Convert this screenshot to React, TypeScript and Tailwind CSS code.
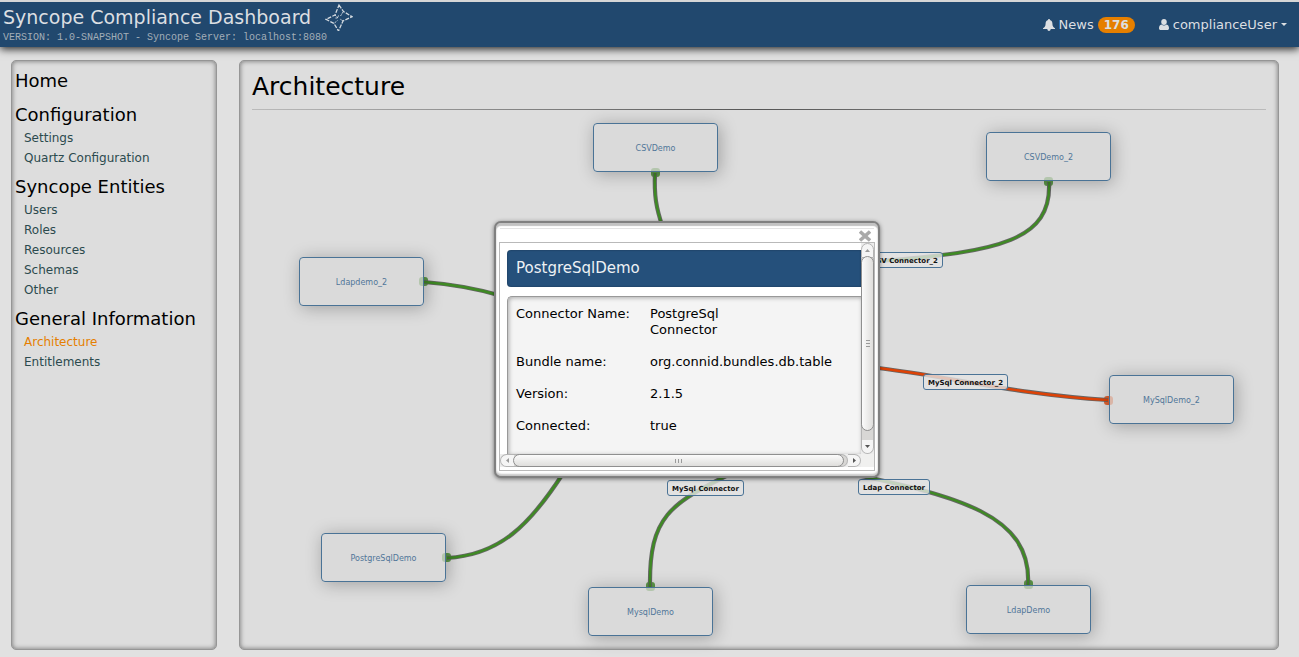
type MenuSection = { title: string; items: string[] };

const menu: MenuSection[] = [
  { title: "Home", items: [] },
  { title: "Configuration", items: ["Settings", "Quartz Configuration"] },
  { title: "Syncope Entities", items: ["Users", "Roles", "Resources", "Schemas", "Other"] },
  { title: "General Information", items: ["Architecture", "Entitlements"] },
];

const nodes = [
  { name: "CSVDemo", place: "left-[341px] top-[13px]" },
  { name: "CSVDemo_2", place: "left-[734px] top-[22px]" },
  { name: "Ldapdemo_2", place: "left-[47px] top-[147px]" },
  { name: "MySqlDemo_2", place: "left-[857px] top-[265px]" },
  { name: "PostgreSqlDemo", place: "left-[69px] top-[423px]" },
  { name: "MysqlDemo", place: "left-[336px] top-[477px]" },
  { name: "LdapDemo", place: "left-[714px] top-[475px]" },
];

const labels = [
  { name: "CSV Connector_2", place: "left-[614px] top-[142px]" },
  { name: "MySql Connector_2", place: "left-[671px] top-[264px]" },
  { name: "MySql Connector", place: "left-[415px] top-[370px]" },
  { name: "Ldap Connector", place: "left-[606px] top-[369px]" },
];

const GREEN = "#3f8a24";
const RED = "#dd4206";

const links = [
  { d: "M403 63 C402 85 404 98 411 118", color: GREEN, x: 403, y: 63 },
  { d: "M797 72 C800 130 748 142 628 151", color: GREEN, x: 796, y: 72 },
  { d: "M172 172 C198 174 223 178 250 186", color: GREEN, x: 171, y: 172 },
  { d: "M856 290 C758 284 698 266 618 257", color: RED, x: 856, y: 291 },
  { d: "M195 448 C248 445 278 415 312 362", color: GREEN, x: 194, y: 448 },
  { d: "M398 477 C397 406 418 394 480 363", color: GREEN, x: 398, y: 477 },
  { d: "M776 475 C780 405 708 386 590 362", color: GREEN, x: 776, y: 475 },
];

const details = [
  ["Connector Name:", "PostgreSql Connector"],
  ["Bundle name:", "org.connid.bundles.db.table"],
  ["Version:", "2.1.5"],
  ["Connected:", "true"],
];

function Logo() {
  return (
    <svg className="h-7 w-7" viewBox="0 0 28 28" fill="none" stroke="#d3dae0" strokeWidth="1.300" aria-hidden="true">
      <path d="M14 2 L18.500 8.500 L27 13.700 L18 18 L13.500 28 L9 20.500 L1 16.300 L10 12 Z" strokeDasharray="4 1.300" />
      <path d="M10 12 L13 15 M13.500 12.500 L12.500 15 L10 15 M18 9 L15.500 13 M18 18 L15 16 M9.500 20 L12.500 17.500" strokeWidth="0.900" strokeDasharray="2 0.800" />
    </svg>
  );
}

function BellIcon() {
  return (
    <svg className="h-3 w-3" viewBox="0 0 12 12" fill="currentColor" aria-hidden="true">
      <path d="M6 0 C6.600 0 7 0.400 6.900 1 C8.600 1.400 9.400 2.700 9.400 4.500 C9.400 7 10.300 8.400 12 9.300 V10 H7.700 C7.600 11.300 6.900 12 6 12 C5.100 12 4.400 11.300 4.300 10 H0 V9.300 C1.700 8.400 2.600 7 2.600 4.500 C2.600 2.700 3.400 1.400 5.100 1 C5 0.400 5.400 0 6 0 Z" />
    </svg>
  );
}

function UserIcon() {
  return (
    <svg className="h-[11px] w-[10px]" viewBox="0 0 10 11" fill="currentColor" aria-hidden="true">
      <path d="M5 0 C6.700 0 7.800 1.300 7.800 3 C7.800 4.700 6.600 6 5 6 C3.400 6 2.200 4.700 2.200 3 C2.200 1.300 3.300 0 5 0 Z M2.500 5.400 C4 6.900 6 6.900 7.500 5.400 C9.300 5.600 10 7.200 10 9.200 C10 10.400 9.300 11 8.300 11 H1.700 C0.700 11 0 10.400 0 9.200 C0 7.200 0.700 5.600 2.500 5.400 Z" />
    </svg>
  );
}

function Header() {
  return (
    <header className="relative flex h-[47px] items-center justify-between border-t-2 border-[#d6d6d6] bg-[#21486e] pl-[3px] pr-3 text-[#dcdfe2] shadow-[0_2px_8px_rgba(0,0,0,0.85)]">
      <div className="self-start">
        <div className="flex h-[30px] items-center gap-[14px]">
          <span className="text-[19px] leading-7">Syncope Compliance Dashboard</span>
          <Logo />
        </div>
        <p className="font-['Liberation_Mono',monospace] text-[10px] leading-3 text-[#a3aeb8]">
          VERSION: 1.0-SNAPSHOT - Syncope Server: localhost:8080
        </p>
      </div>
      <nav className="flex items-center gap-6 text-[13px] leading-4">
        <a href="#news" className="flex items-center gap-1">
          <BellIcon />
          News
          <span className="rounded-full bg-[#e57f00] px-[6px] text-[12px] font-bold leading-4">176</span>
        </a>
        <button type="button" className="flex items-center gap-1">
          <UserIcon />
          complianceUser
          <svg className="h-[3px] w-[6px]" viewBox="0 0 6 3" fill="currentColor" aria-hidden="true">
            <path d="M0 0 H6 L3 3 Z" />
          </svg>
        </button>
      </nav>
    </header>
  );
}

function Sidebar() {
  return (
    <nav className="w-[206px] shrink-0 rounded-[5px] border border-[#969696] bg-[#dddddd] px-[3px] pt-[7px] shadow-[inset_0_0_5px_rgba(0,0,0,0.5)]">
      {menu.map((section) => (
        <section key={section.title} className="mb-[6px] first:mb-[9px]">
          <h2 className="text-[18px] leading-[25px] text-black">{section.title}</h2>
          {section.items.length > 0 && (
            <ul className="pl-[9px] pt-px">
              {section.items.map((item) => (
                <li key={item} className="h-5 text-[12px] leading-5">
                  <a href={"#" + item} className={item === "Architecture" ? "text-[#e57f00]" : "text-[#2c4a4e]"}>
                    {item}
                  </a>
                </li>
              ))}
            </ul>
          )}
        </section>
      ))}
    </nav>
  );
}

function Connections() {
  return (
    <svg className="absolute inset-0 h-full w-full overflow-visible" fill="none" aria-hidden="true">
      {links.map((l) => (
        <g key={l.d}>
          <rect x={l.x - 4} y={l.y - 5} width="9" height="9" rx="3" fill={l.color} opacity="0.800" />
          <path d={l.d} stroke="#666666" strokeWidth="4.200" />
          <path d={l.d} stroke={l.color} strokeWidth="2.400" />
        </g>
      ))}
    </svg>
  );
}

function VerticalScrollbar() {
  return (
    <div className="flex w-[13px] flex-col bg-[#ececec]">
      <button type="button" aria-label="Scroll up" className="flex h-[15px] items-center justify-center rounded-t-full border border-[#b4b4b4] bg-[#f5f5f5]">
        <svg className="h-[3px] w-[5px]" viewBox="0 0 5 3" fill="#9a9a9a"><path d="M0 3 L2.500 0 L5 3 Z" /></svg>
      </button>
      <div className="flex flex-1 flex-col border-x border-[#b4b4b4] bg-[#d8d7d5] pb-[9px]">
        <div className="-mx-px -mt-[2px] flex flex-1 flex-col items-center justify-center gap-[2px] rounded-full border border-[#8f8f8f] bg-linear-to-r from-[#fbfbfb] to-[#dfdedc]">
          <span className="h-px w-[4px] bg-[#9a9a9a]" />
          <span className="h-px w-[4px] bg-[#9a9a9a]" />
          <span className="h-px w-[4px] bg-[#9a9a9a]" />
        </div>
      </div>
      <button type="button" aria-label="Scroll down" className="flex h-[14px] items-center justify-center rounded-b-full border border-t-0 border-[#b4b4b4] bg-[#f5f5f5]">
        <svg className="h-[3px] w-[5px]" viewBox="0 0 5 3" fill="#555555"><path d="M0 0 L2.500 3 L5 0 Z" /></svg>
      </button>
    </div>
  );
}

function HorizontalScrollbar() {
  return (
    <div className="flex h-[13px] bg-[#ececec]">
      <button type="button" aria-label="Scroll left" className="flex w-[14px] items-center justify-center rounded-l-full border border-r-0 border-[#b4b4b4] bg-[#f5f5f5]">
        <svg className="h-[5px] w-[3px]" viewBox="0 0 3 5" fill="#9a9a9a"><path d="M3 0 L0 2.500 L3 5 Z" /></svg>
      </button>
      <div className="flex flex-1 rounded-r-full border-y border-r border-[#b4b4b4] bg-[#d8d7d5] pr-[3px]">
        <div className="-my-px -ml-px flex flex-1 items-center justify-center gap-[2px] rounded-full border border-[#8f8f8f] bg-linear-to-b from-[#fbfbfb] to-[#dfdedc]">
          <span className="h-[4px] w-px bg-[#9a9a9a]" />
          <span className="h-[4px] w-px bg-[#9a9a9a]" />
          <span className="h-[4px] w-px bg-[#9a9a9a]" />
        </div>
      </div>
      <button type="button" aria-label="Scroll right" className="flex w-[13px] items-center justify-center rounded-r-full border border-l-0 border-[#b4b4b4] bg-[#f5f5f5]">
        <svg className="h-[5px] w-[3px]" viewBox="0 0 3 5" fill="#555555"><path d="M0 0 L3 2.500 L0 5 Z" /></svg>
      </button>
    </div>
  );
}

function ConnectorDialog() {
  return (
    <section
      role="dialog"
      aria-label="PostgreSqlDemo"
      className="absolute left-[242px] top-[111px] flex h-[257px] w-[386px] flex-col rounded-[7px] border-2 border-[#808080] bg-white px-[3px] pb-[5px] shadow-[0_1px_4px_rgba(0,0,0,0.5),inset_0_3px_1px_#c2c2c2,inset_0_-2px_2px_#c4c4c4]"
    >
      <div className="mx-px mt-[5px] flex h-[14px] items-end justify-end border-t border-[#e4e4e4] pr-[3px]">
        <button type="button" aria-label="Close">
          <svg className="h-3 w-3" viewBox="0 0 12 12" fill="none" stroke="#a9a9a9" strokeWidth="3.400">
            <path d="M1 1.500 L11 10.500 M11 1.500 L1 10.500" />
          </svg>
        </button>
      </div>
      <div className="flex flex-1 flex-col border border-[#b9b9b9] pb-[3px]">
        <div className="flex flex-1">
          <div className="flex flex-1 flex-col overflow-hidden pl-[7px] pt-[7px]">
            <h3 className="h-[37px] rounded-l-[4px] bg-[#25507b] pl-[9px] text-[15px] leading-[37px] text-[#eef1f4] shadow-[inset_0_0_2px_rgba(0,0,0,0.4)]">
              PostgreSqlDemo
            </h3>
            <dl className="mt-[9px] flex flex-1 flex-col gap-4 rounded-tl-[5px] border-l border-t border-[#999999] bg-[#f4f4f4] pl-2 pt-[9px] text-[13px] leading-4 text-black shadow-[inset_1px_1px_4px_rgba(0,0,0,0.3)]">
              {details.map(([term, value]) => (
                <div key={term} className="flex">
                  <dt className="w-[134px] shrink-0">{term}</dt>
                  <dd className="w-[110px]">{value}</dd>
                </div>
              ))}
            </dl>
          </div>
          <VerticalScrollbar />
        </div>
        <div className="flex bg-[#f0f0ef]">
          <div className="flex-1">
            <HorizontalScrollbar />
          </div>
          <div className="w-[13px]" />
        </div>
      </div>
    </section>
  );
}

export default function App() {
  return (
    <div className="flex min-h-screen flex-col bg-[#e1e1e1] font-['DejaVu_Sans',sans-serif]">
      <Header />
      <div className="flex flex-1 gap-[22px] pb-[7px] pl-[11px] pr-5 pt-[13px]">
        <Sidebar />
        <main className="flex flex-1 flex-col rounded-[5px] border border-[#969696] bg-[#dddddd] px-3 pt-[11px] shadow-[inset_0_0_5px_rgba(0,0,0,0.5)]">
          <h1 className="h-[37px] text-[25px] leading-[30px] text-black">Architecture</h1>
          <div className="h-px bg-linear-to-r from-[#bbbbbb] via-[#555555] to-[#bbbbbb]" />
          <div className="relative min-h-[530px] flex-1">
            <Connections />
            {nodes.map((n) => (
              <div
                key={n.name}
                className={
                  "absolute flex h-[49px] w-[125px] items-center justify-center rounded-[4px] border border-[#4a7396] bg-[#d8d8d8]/70 pt-[3px] text-[8px] text-[#507699] shadow-[2px_2px_17px_rgba(0,0,0,0.28)] " +
                  n.place
                }
              >
                {n.name}
              </div>
            ))}
            {labels.map((l) => (
              <div
                key={l.name}
                className={
                  "absolute flex h-4 items-center rounded-[3px] border border-[#4a7396] bg-[#e4e4e4]/80 px-1 pt-px text-[7px] font-bold leading-3 text-[#111111] " +
                  l.place
                }
              >
                {l.name}
              </div>
            ))}
            <ConnectorDialog />
          </div>
        </main>
      </div>
    </div>
  );
}
